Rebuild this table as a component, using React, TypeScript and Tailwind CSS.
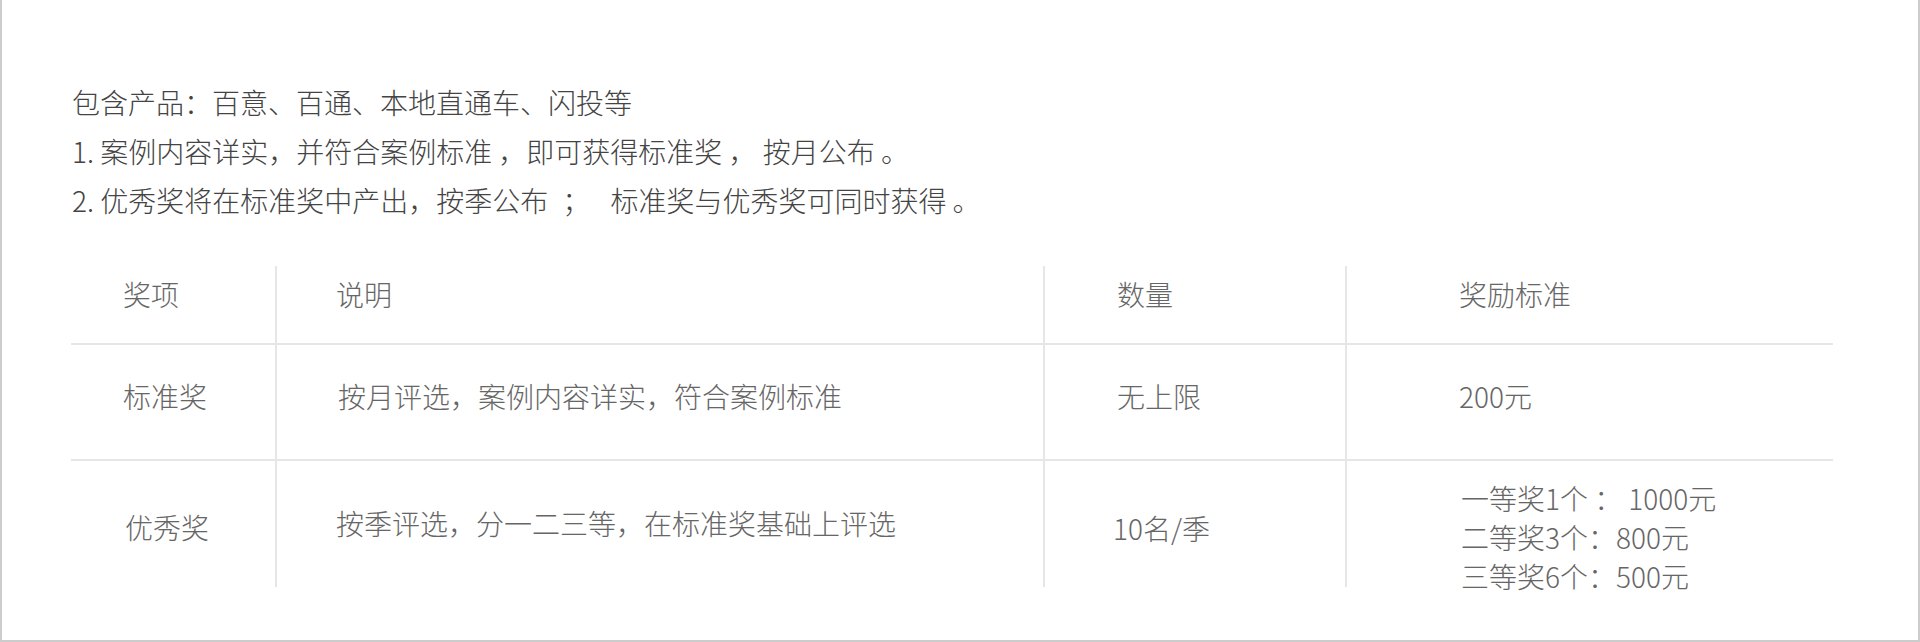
const rows = [
  {
    name: '标准奖',
    desc: '按月评选，案例内容详实，符合案例标准',
    count: '无上限',
    reward: ['200元'],
  },
  {
    name: '优秀奖',
    desc: '按季评选，分一二三等，在标准奖基础上评选',
    count: '10名/季',
    reward: ['一等奖1个 ： 1000元', '二等奖3个：800元', '三等奖6个：500元'],
  },
];

const font = { fontFamily: '"Noto Sans CJK SC", "Noto Sans", sans-serif' };

export default function App() {
  return (
    <div
      className="h-[642px] w-[1920px] border-x-2 border-b-2 border-[#cccccc] bg-white font-light"
      style={font}
    >
      {/* intro */}
      <div className="pl-[70px] pt-[78px] text-[28px] leading-[49px] text-[#444444]">
        <p>包含产品：百意、百通、本地直通车、闪投等</p>
        <p>1. 案例内容详实，并符合案例标准 ，即可获得标准奖 ， 按月公布 。</p>
        <p>2. 优秀奖将在标准奖中产出，按季公布{'\u2002'}；{'\u2002'} 标准奖与优秀奖可同时获得 。</p>
      </div>

      {/* table */}
      <div className="ml-[69px] mt-[41px] w-[1762px] text-[28px] text-[#666666]">
        <div className="grid h-[79px] grid-cols-[206px_768px_302px_486px] grid-rows-[77px] border-b-2 border-[#e6e6e6] leading-[49px]">
          <div className="border-r-2 border-[#e6e6e6] pl-[52px] pt-[4px]">奖项</div>
          <div className="border-r-2 border-[#e6e6e6] pl-[59px] pt-[4px]">说明</div>
          <div className="border-r-2 border-[#e6e6e6] pl-[72px] pt-[4px]">数量</div>
          <div className="pl-[112px] pt-[4px]">奖励标准</div>
        </div>

        <div className="grid h-[116px] grid-cols-[206px_768px_302px_486px] grid-rows-[114px] border-b-2 border-[#e6e6e6] leading-[49px]">
          <div className="border-r-2 border-[#e6e6e6] pl-[52px] pt-[27px]">{rows[0].name}</div>
          <div className="border-r-2 border-[#e6e6e6] pl-[61px] pt-[27px]">{rows[0].desc}</div>
          <div className="border-r-2 border-[#e6e6e6] pl-[72px] pt-[27px]">{rows[0].count}</div>
          <div className="pl-[112px] pt-[27px]">{rows[0].reward[0]}</div>
        </div>

        <div className="grid h-[126px] grid-cols-[206px_768px_302px_486px] grid-rows-[126px] leading-[49px]">
          <div className="border-r-2 border-[#e6e6e6] pl-[54px] pt-[42px]">{rows[1].name}</div>
          <div className="border-r-2 border-[#e6e6e6] pl-[59px] pt-[38px]">{rows[1].desc}</div>
          <div className="border-r-2 border-[#e6e6e6] pl-[68px] pt-[43px]">{rows[1].count}</div>
          <div className="pl-[114px] pt-[18px] leading-[39px]">
            {rows[1].reward.map((line) => (
              <p key={line} className="whitespace-nowrap">
                {line}
              </p>
            ))}
          </div>
        </div>
      </div>
    </div>
  );
}
